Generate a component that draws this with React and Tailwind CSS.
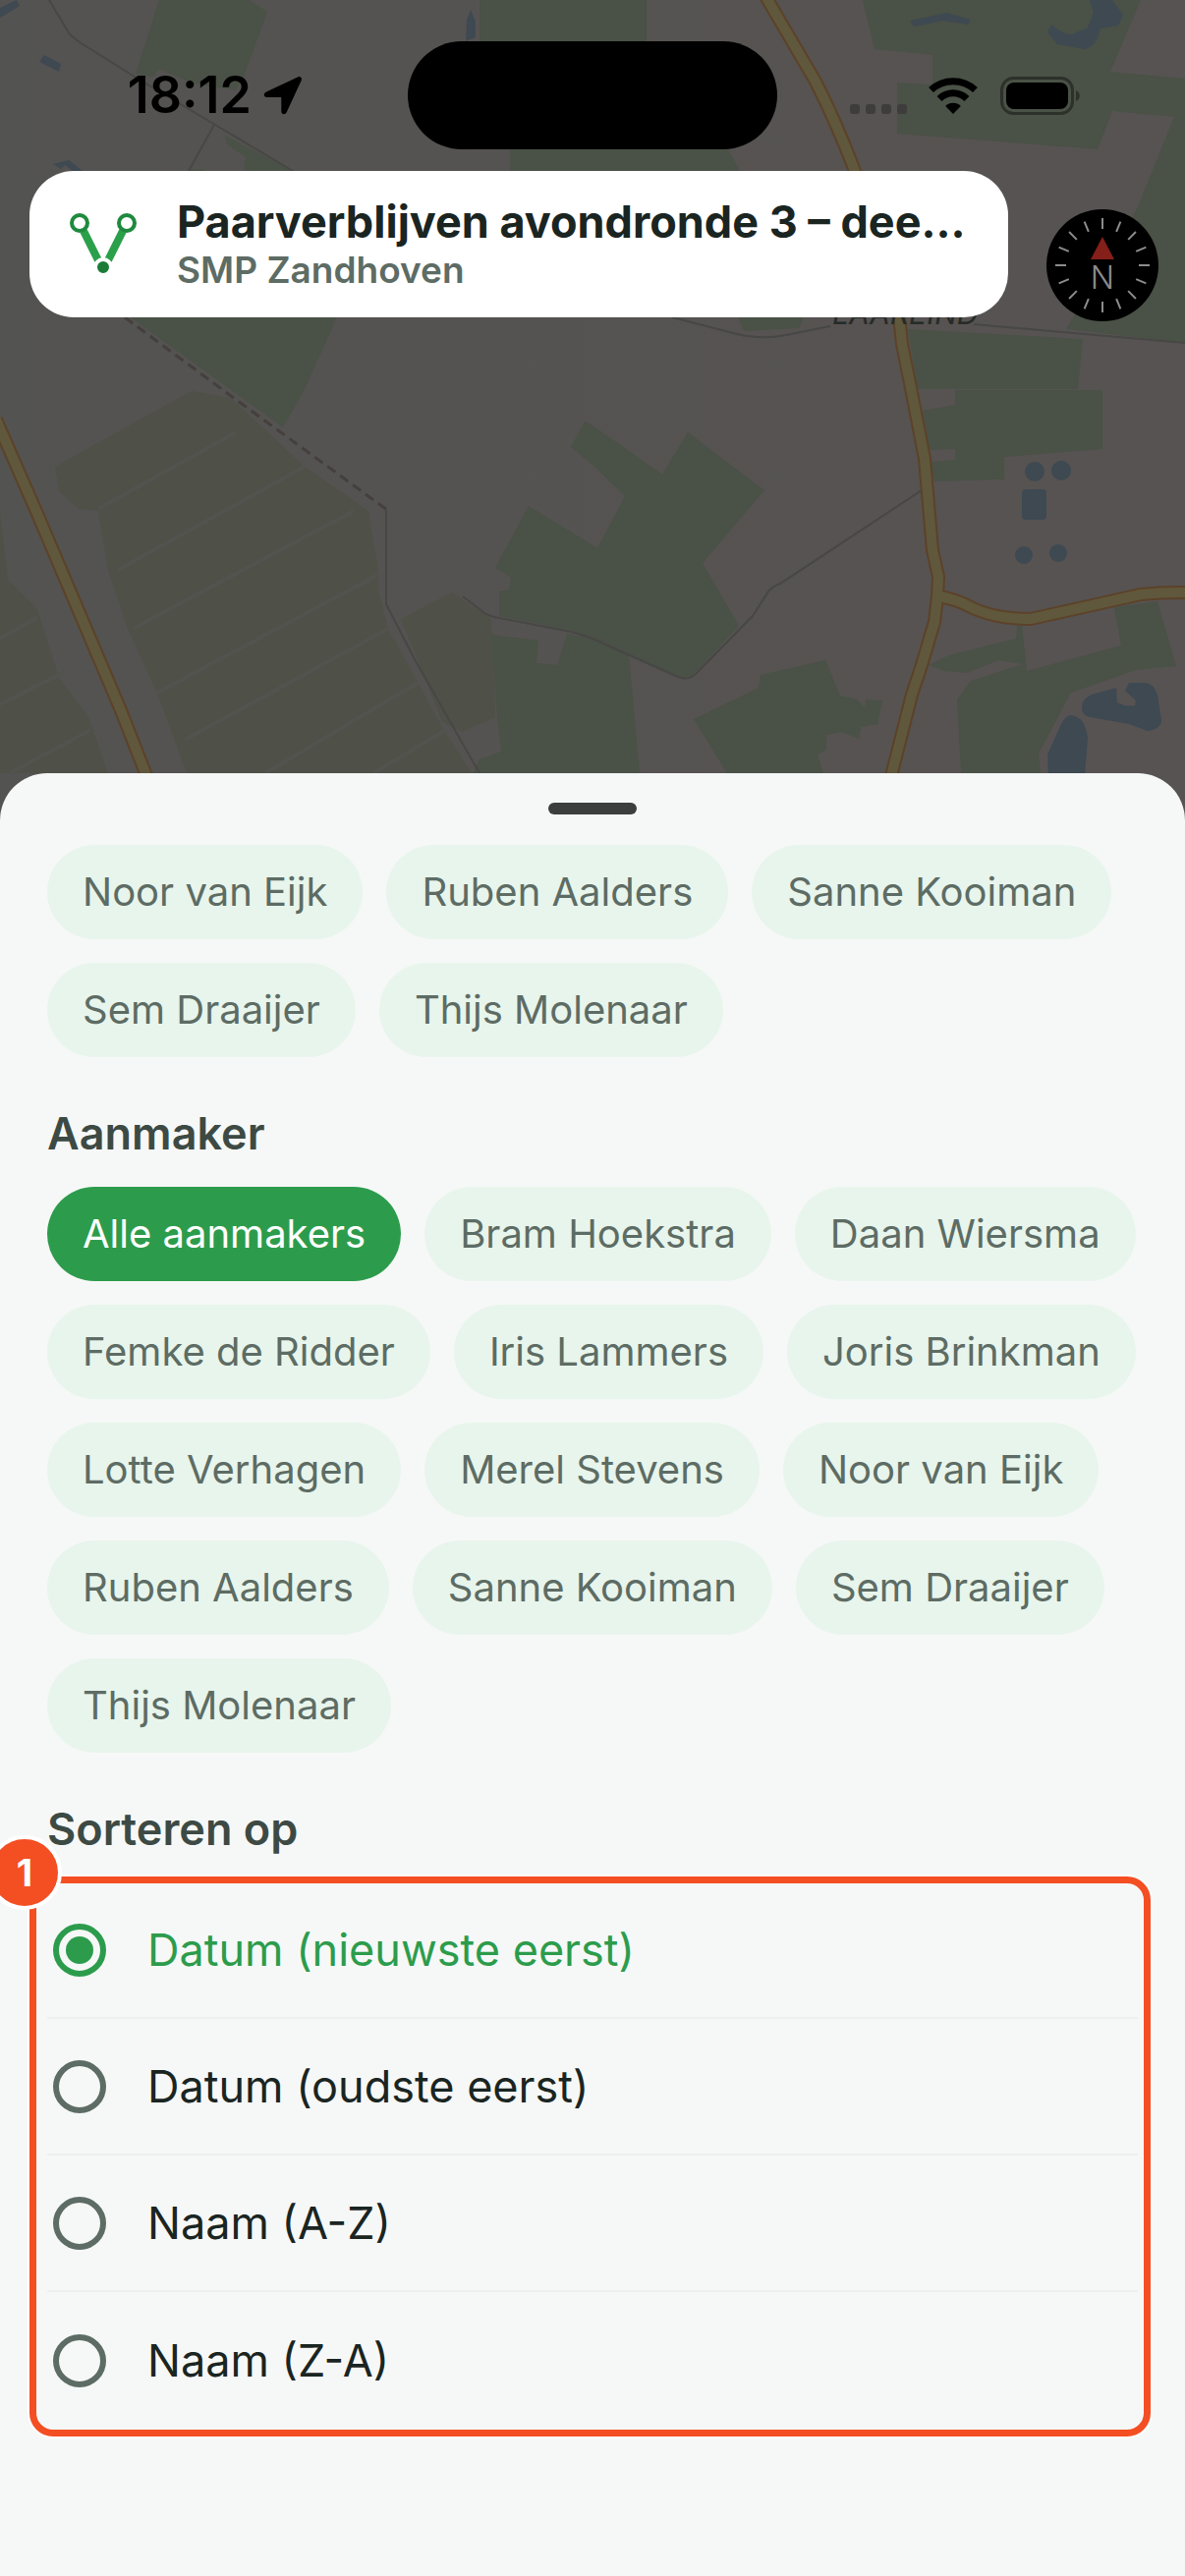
import React, { useState } from 'react';

const namenBoven = ['Noor van Eijk', 'Ruben Aalders', 'Sanne Kooiman', 'Sem Draaijer', 'Thijs Molenaar'];

const aanmakers = [
    'Alle aanmakers',
    'Bram Hoekstra',
    'Daan Wiersma',
    'Femke de Ridder',
    'Iris Lammers',
    'Joris Brinkman',
    'Lotte Verhagen',
    'Merel Stevens',
    'Noor van Eijk',
    'Ruben Aalders',
    'Sanne Kooiman',
    'Sem Draaijer',
    'Thijs Molenaar',
];

const sorteringen = [
    { id: 'datum-nieuw', label: 'Datum (nieuwste eerst)' },
    { id: 'datum-oud', label: 'Datum (oudste eerst)' },
    { id: 'naam-az', label: 'Naam (A-Z)' },
    { id: 'naam-za', label: 'Naam (Z-A)' },
];

const bossen = [
    '162,0 254,0 272,12 248,78 240,92 194,84 162,70 156,78 138,75',
    '488,0 658,0 658,42 741,152 753,174 519,174 519,152 488,42',
    '229,138 285,167 296,174 248,174 250,160 231,147',
    '192,172 206,172 212,176 190,176',
    '133,323 343,323 308,400 288,435',
    '878,0 1161,0 1130,73 1206,80 1206,349 1085,335 1157,213 1195,119 1132,113 1117,152 913,136 913,84 949,86 949,56 890,50',
    '751,323 818,323 813,334 757,337',
    '924,335 1102,345 1097,396 934,396',
    '972,397 1122,397 1122,457 1022,465 1022,488 951,490 947,470 972,468 972,457 945,458 939,418 972,412',
    '595,429 603,433 674,483 700,440 778,499 715,573 752,637 705,687 695,690 603,650 583,642 508,627 508,602 518,600 520,588 504,578 538,515 608,558 636,505 603,473 581,455',
    '500,646 548,652 546,675 567,677 577,645 603,651 640,667 651,787 481,787 488,773 510,765 506,730',
    '774,687 840,672 855,708 872,712 880,720 882,712 898,713 893,737 876,740 874,752 857,745 841,748 841,763 832,768 838,787 740,787 706,732 772,700',
    '945,677 966,667 1034,650 1035,637 1040,637 1045,683 1141,657 1134,618 1178,612 1197,678 1156,682 1090,705 1057,767 1059,787 978,787 974,712 988,693 1041,676 1016,672 984,685 961,683',
];

const boomgaarden = [
    '56,475 195,398 235,405 310,475 375,520 385,580 385,600 395,640 450,740 480,787 190,787 160,705 130,640 110,580 100,520 80,518 60,500',
    '408,630 460,603 500,630 504,730 470,745 450,735',
    '0,520 8,590 38,620 60,690 90,730 110,787 0,787',
];

const wegen = [
    'M779 -4 830 83 Q850 122 870 174 L908 290 Q915 315 918 350 L928 400 941 467 Q944 500 949 560 L955 587 954 607 951 633 938 677 928 707 907 790',
    'M954 607 Q972 609 990 619 Q1014 630 1049 630 L1161 605 Q1180 603 1210 603',
    'M-4 427 38 523 123 723 150 792',
];

function Kaart() {
    return (
        <svg className="absolute inset-0 h-full w-full" viewBox="0 0 1206 835" preserveAspectRatio="xMidYMin slice" aria-hidden="true">
            <defs>
                <linearGradient id="grond" x1="0" y1="0" x2="1" y2="0">
                    <stop offset="0" stopColor="#535351" />
                    <stop offset="0.4" stopColor="#555351" />
                    <stop offset="1" stopColor="#575352" />
                </linearGradient>
            </defs>
            <rect width="1206" height="835" fill="url(#grond)" />
            <g fill="#4f5047">
                {boomgaarden.map((p) => <polygon key={p} points={p} />)}
            </g>
            <path
                d="M100 518 240 440M120 580 310 475M135 640 360 520M160 705 385 585M188 753 395 640M270 787 425 695M380 787 455 742M0 650 38 628M0 717 65 684M10 787 92 743"
                stroke="#52534e"
                strokeWidth="4"
            />
            <g fill="#4a5146">
                {bossen.map((p) => <polygon key={p} points={p} />)}
            </g>
            <g fill="#3e4952">
                <polygon points="479,10 475,20 474,42 484,38 484,22" />
                <polygon points="45,56 62,65 60,73 40,63" />
                <polygon points="0,8 17,0 20,6 0,18" />
                <path d="M54 167 70 163 84 174H74L66 168 62 172Z" />
                <path d="M926 21 964 13 988 20 985 25 960 21 930 27Z" />
                <path d="M1109 0H1132L1143 15 1138 26 1120 29Q1116 48 1103 50L1076 45 1066 33 1070 25Q1082 35 1091 35L1107 28 1113 13Z" />
                <circle cx="1053" cy="480" r="10" />
                <circle cx="1080" cy="479" r="10" />
                <rect x="1040" y="498" width="25" height="31" rx="4" />
                <circle cx="1042" cy="565" r="9" />
                <circle cx="1077" cy="563" r="9" />
                <path d="M1136 700 1111 707Q1101 711 1101 720T1110 730L1149 737 1168 744Q1182 742 1182 733L1178 707Q1174 696 1166 695H1149L1145 703 1156 713 1155 718Q1146 720 1137 715Z" />
                <path d="M1091 728Q1102 730 1105 742L1107 750 1104 790H1067L1066 768 1080 737Q1084 728 1091 728Z" />
            </g>
            <g fill="none" stroke="#474745" strokeWidth="2">
                <path d="M50 0 71 35 81 43 140 80 219 127 298 174" />
                <path d="M218 127 192 174" />
                <path d="M684 323 750 340Q776 346 800 341L845 332M991 330 1206 349" />
                <path d="M393 519V615L423 673 488 787" />
                <path d="M471 607 488 620Q494 626 503 628L581 643 603 650 690 689Q700 693 708 686L766 627 782 602Q786 597 794 594L938 499" />
            </g>
            <path d="M127 323 231 400 394 519" fill="none" stroke="#453f3d" strokeWidth="3" strokeDasharray="10 6" />
            <g fill="none" stroke="#5c4229" strokeWidth="14" strokeLinejoin="round">
                {wegen.map((d) => <path key={d} d={d} />)}
            </g>
            <g fill="none" stroke="#60583c" strokeWidth="10" strokeLinejoin="round">
                {wegen.map((d) => <path key={d} d={d} />)}
            </g>
            <text x="847" y="330" className="fill-[#272b28] text-[30px] italic">LAAREIND</text>
        </svg>
    );
}

function StatusBalk() {
    return (
        <div className="grid grid-cols-[1fr_376px_1fr] pt-[42px]">
            <div className="flex h-[110px] items-center justify-end gap-3 pr-[107px] text-black">
                <span className="text-[52px] leading-none font-semibold">18:12</span>
                <svg className="size-10" viewBox="0 0 40 40" fill="currentColor" aria-hidden="true">
                    <path d="M35 1.5 3 16.5C-.5 18.200 .3 22 3.800 22H17.300C18 22 18.300 22.300 18.300 23V36.200C18.300 39.800 22.200 40.400 23.800 37L38.600 5C39.800 2.200 37.800.2 35 1.500Z" />
                </svg>
            </div>
            <div className="h-[110px] rounded-full bg-black" />
            <div className="flex h-[110px] items-center pl-[74px] text-black">
                <svg className="h-10 w-[236px]" viewBox="0 0 236 40" aria-hidden="true">
                    <g fill="#3f3d3b">
                        <rect x="0" y="29" width="10" height="10" rx="3" />
                        <rect x="16" y="29" width="10" height="10" rx="3" />
                        <rect x="32" y="29" width="10" height="10" rx="3" />
                        <rect x="48" y="29" width="10" height="10" rx="3" />
                    </g>
                    <g fill="none" stroke="#000" strokeWidth="7">
                        <path d="M82.500 14.500A33 33 0 0 1 127.500 14.500" />
                        <path d="M91 23.500A20 20 0 0 1 119 23.500" />
                    </g>
                    <path d="M105 39 97.200 31A11 11 0 0 1 112.800 31Z" />
                    <rect x="154.500" y="2.500" width="72" height="36" rx="12" fill="none" stroke="#2d312a" strokeWidth="3" />
                    <rect x="159" y="7" width="63" height="27" rx="8" />
                    <path d="M230 15C235 17 235 24 230 26Z" fill="#2d312a" />
                </svg>
            </div>
        </div>
    );
}

function Kompas() {
    const streepjes = Array.from({ length: 16 }, (_, i) => i * 22.5);

    return (
        <button type="button" aria-label="Kompas" className="size-[114px] shrink-0 rounded-full bg-black">
            <svg viewBox="0 0 114 114" className="size-full">
                {streepjes.map((hoek) => (
                    <path key={hoek} d="M57 9V20" stroke="#8c8c8c" strokeWidth="2" transform={`rotate(${hoek} 57 57)`} />
                ))}
                <polygon points="57,28 69,51 45,51" fill="#851f19" />
                <text x="57" y="81" textAnchor="middle" className="fill-[#8c8c8c] text-[32px] font-light">N</text>
            </svg>
        </button>
    );
}

function Chip({ naam, actief, onClick }) {
    return (
        <button
            type="button"
            onClick={onClick}
            className={`h-24 rounded-full px-9 text-[40px] leading-none ${actief ? 'bg-[#2c9c4c] text-white' : 'bg-[#e8f5ec] text-[#5d6c64]'}`}
        >
            {naam}
        </button>
    );
}

export default function App() {
    const [aanmaker, setAanmaker] = useState('Alle aanmakers');
    const [sortering, setSortering] = useState('datum-nieuw');

    return (
        <div className="flex min-h-screen flex-col overflow-hidden bg-[#545250] font-['Inter','Liberation_Sans',sans-serif]">
            <header className="relative h-[835px]">
                <Kaart />
                <div className="relative">
                    <StatusBalk />
                    <div className="flex items-start gap-[39px] pt-[22px] pr-[27px] pl-[30px]">
                        <div className="flex h-[149px] min-w-0 flex-1 items-center rounded-[45px] bg-white pl-10">
                            <svg className="h-[66px] w-[70px] shrink-0" viewBox="0 0 70 66" fill="none" aria-hidden="true">
                                <path d="M15 19 30 49M55 19 40 49" stroke="#2ba04b" strokeWidth="8" />
                                <circle cx="11" cy="11" r="8" fill="#fff" stroke="#1f8a3e" strokeWidth="4" />
                                <circle cx="59" cy="11" r="8" fill="#fff" stroke="#1f8a3e" strokeWidth="4" />
                                <circle cx="35" cy="56" r="8" fill="#1b7c37" stroke="#fff" strokeWidth="4" />
                            </svg>
                            <div className="ml-10 min-w-0">
                                <h1 className="text-[45px] leading-[52px] font-bold whitespace-nowrap text-[#1a2522]">Paarverblijven avondronde 3 – dee...</h1>
                                <p className="text-[37px] leading-[46px] font-semibold text-[#5d6c64]">SMP Zandhoven</p>
                            </div>
                        </div>
                        <div className="pt-[39px]">
                            <Kompas />
                        </div>
                    </div>
                </div>
            </header>

            <main className="relative -mt-12 flex-1 rounded-t-[48px] bg-[#f6f8f7] px-12 pt-[30px]">
                <div className="mx-auto h-3 w-[90px] rounded-full bg-[#3c3e3d]" />

                <div className="mt-[31px] flex flex-wrap gap-6">
                    {namenBoven.map((naam) => <Chip key={naam} naam={naam} />)}
                </div>

                <h2 className="mt-[50px] text-[45px] leading-[56px] font-semibold text-[#3d4a44]">Aanmaker</h2>
                <div className="mt-[26px] flex flex-wrap gap-6">
                    {aanmakers.map((naam) => (
                        <Chip key={naam} naam={naam} actief={naam === aanmaker} onClick={() => setAanmaker(naam)} />
                    ))}
                </div>

                <h2 className="mt-[50px] text-[45px] leading-[56px] font-semibold text-[#3d4a44]">Sorteren op</h2>
                <div className="relative mt-[26px]">
                    {sorteringen.map((s) => (
                        <label
                            key={s.id}
                            className="flex h-[139px] items-center gap-[42px] border-b-2 border-[#edf0ee] pl-1.5 text-[45px] text-[#1a2522] last-of-type:border-b-0 has-checked:text-[#2c9c4c]"
                        >
                            <input
                                type="radio"
                                name="sortering"
                                checked={sortering === s.id}
                                onChange={() => setSortering(s.id)}
                                className="grid size-[54px] appearance-none place-content-center rounded-full border-[6px] border-[#5d6c64] before:size-7 before:rounded-full checked:border-[#2c9c4c] checked:before:bg-[#2c9c4c]"
                            />
                            {s.label}
                        </label>
                    ))}
                    {/* Kader met nummer rond de sorteeropties */}
                    <div className="pointer-events-none absolute -top-1.5 -right-[13px] -bottom-2 -left-[18px] rounded-3xl border-[7px] border-[#f44e23] ring-2 ring-white" />
                    <div className="pointer-events-none absolute -top-12 -left-[61px] flex size-[76px] items-center justify-center rounded-full border-4 border-white bg-[#f44e23] text-[38px] font-bold text-white">
                        1
                    </div>
                </div>
            </main>
        </div>
    );
}
